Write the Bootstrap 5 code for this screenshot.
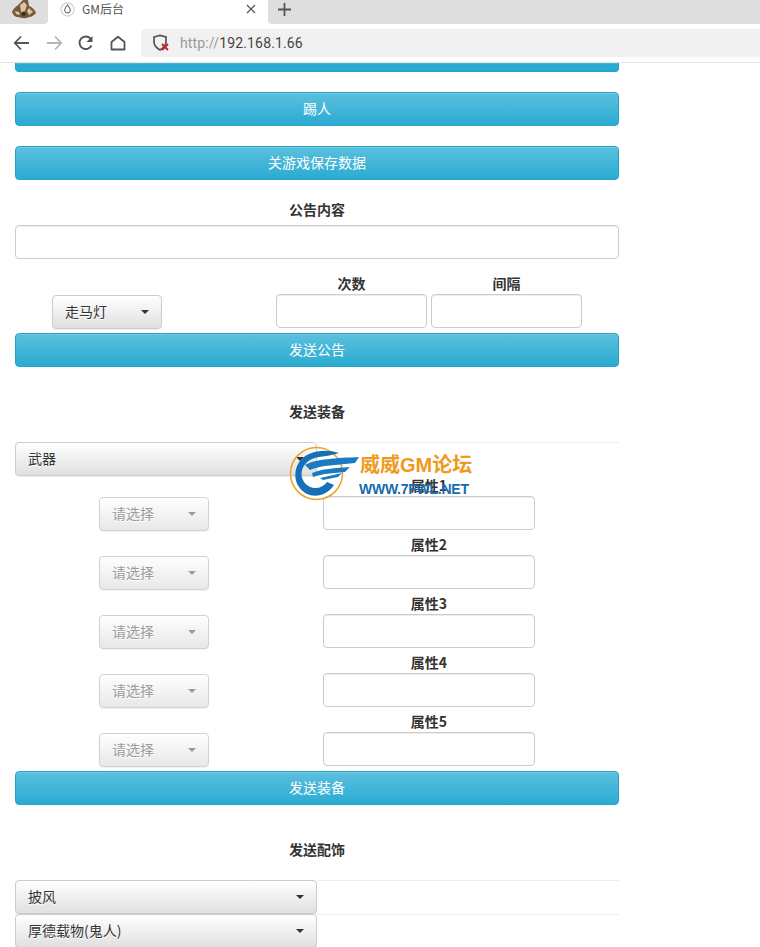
<!DOCTYPE html>
<html lang="zh">
<head>
<meta charset="utf-8">
<title>GM后台</title>
<link rel="stylesheet" href="https://cdn.jsdelivr.net/npm/bootstrap@5.3.0/dist/css/bootstrap.min.css">
<style>
html,body{height:947px;overflow:hidden;background:#fff}
body{font-family:"Noto Sans CJK SC","Liberation Sans",sans-serif;font-size:14px;color:#333;position:relative}
.tabstrip{height:24px;background:#fff;overflow:hidden}
.avatar-tab{width:48px;height:24px;justify-content:center;border-bottom-right-radius:4px;background:#dedede;padding-bottom:5px}
.active-tab{width:220px;height:24px;background:#fff;padding:0 12px 6px 12px;font-size:12px;color:#555}
.tab-title{margin-left:7px}
.newtab{flex:1;height:24px;padding:0 0 6px 10px;background:#dedede;border-bottom-left-radius:4px}
.toolbar{height:39px;background:#fff;border-bottom:1px solid #e6e6e6;padding:0 0 0 13px;overflow:hidden}
.tool-icons{gap:14px}
.urlbar{height:28px;flex:1;margin-left:14px;background:#f1f1f1;border-radius:4px 0 0 4px;padding-left:11px;font-size:14px;font-family:"Roboto","Liberation Sans",sans-serif;color:#444;letter-spacing:.15px}
.scheme{color:#999;margin-left:10px}
.pagebody{width:634px;height:885px;padding:0 15px;overflow:hidden}
.sky{display:block;width:100%;height:34px;padding:0 0 2px;border:1px solid #28a4c9;border-radius:4px;color:#fff;font-size:14px;background:linear-gradient(#5bc0de,#2aabd2);box-shadow:inset 0 1px 0 rgba(255,255,255,.15)}
.sky:hover{color:#fff}
.clipped{height:9px;border-top:0;border-radius:0 0 4px 4px;background:#2aabd2;margin-bottom:20px}
.gap-after{margin-bottom:20px}
.capt{font-weight:700;text-align:center;line-height:18px;height:20px}
.capt-gap{margin-bottom:5px}
.field{display:block;height:34px;width:100%;border:1px solid #ccc;border-radius:4px;background:#fff;box-shadow:inset 0 1px 1px rgba(0,0,0,.075)}
.pick{display:flex;align-items:center;justify-content:space-between;height:34px;padding:0 12px 2px;border:1px solid #ccc;border-radius:4px;color:#333;font-size:14px;background:linear-gradient(#fff,#e0e0e0);text-shadow:0 1px 0 #fff;box-shadow:inset 0 1px 0 rgba(255,255,255,.15),0 1px 1px rgba(0,0,0,.075)}
.pick::after{margin:2px 0 0;border-top-width:4px;border-right-width:4px;border-left-width:4px;vertical-align:middle}
.pick-sm{width:110px}
.pick-wide{width:302px}
.pick[disabled]{opacity:.65;color:#666;background:linear-gradient(#fff,#dcdcdc);border-color:#bbb}
.notice-row{height:74px}
.notice-type{margin-left:37px;margin-top:36px}
.count-col{width:151px}
.count-col+.count-col{margin-left:4px}
.count-wrap{margin-left:114px;margin-top:15px}
.equip-head{margin-top:35px;margin-bottom:20px}
.rule-row{height:34px}
.rule-fill{flex:1;border-top:1px solid #eee}
.attr{height:59px}
.attr-left{width:308px;padding-left:84px;padding-top:21px}
.attr-right{width:212px}
.mark-logo{position:absolute;left:289px;top:445px;width:185px;height:60px;pointer-events:none}
.mark-cn{position:absolute;left:71px;top:6px;font-size:20px;line-height:28px;font-weight:700;color:#ef9a1c;white-space:nowrap;font-family:"Liberation Sans","Noto Sans CJK SC",sans-serif}
.mark-en{position:absolute;left:70px;top:36px;font-size:14px;line-height:16px;font-weight:700;color:#156bb0;white-space:nowrap;font-family:"Liberation Sans",sans-serif;letter-spacing:-.25px}
</style>
</head>
<body>
<div class="tabstrip d-flex align-items-stretch">
  <div class="avatar-tab d-flex align-items-center">
    <svg width="26" height="20" viewBox="0 0 26 20"><path d="M1 12C3 7 7 6 9 3l3-3h5l1 6c3 1 6 4 7 7-3 4-7 4-10 5-3 1-6-1-8-1-3 0-5-2-6-5z" fill="#75593a"/><path d="M9 5l4-3 3 3-2 6-4 1zM18 8l4 4-4 3-2-4zM4 11l4 1 1 3-4-1z" fill="#d9c5a3"/><path d="M12 12l3 1-1 3-4-1z" fill="#3c2a1a"/></svg>
  </div>
  <div class="active-tab d-flex align-items-center">
    <svg width="15" height="15" viewBox="0 0 16 16" fill="none"><circle cx="8" cy="8" r="7" stroke="#ccc" stroke-width="1.2"/><path d="M8 3c2 2.6 3 4 3 5.6a3 3 0 0 1-6 0C5 7 6 5.600 8 3z" stroke="#777" stroke-width="1.2"/></svg>
    <span class="tab-title flex-grow-1">GM后台</span>
    <svg width="10" height="10" viewBox="0 0 10 10"><path d="M1 1l8 8M9 1l-8 8" stroke="#555" stroke-width="1.2"/></svg>
  </div>
  <div class="newtab d-flex align-items-center">
    <svg width="13" height="13" viewBox="0 0 13 13"><path d="M6.500 0v13M0 6.500h13" stroke="#555" stroke-width="1.800"/></svg>
  </div>
</div>
<div class="toolbar d-flex align-items-center">
  <div class="tool-icons d-flex align-items-center">
    <svg width="18" height="16" viewBox="0 0 18 16" fill="none"><path d="M16 8H2M8 1.500L1.800 8 8 14.500" stroke="#555" stroke-width="1.800"/></svg>
    <svg width="18" height="16" viewBox="0 0 18 16" fill="none"><path d="M2 8h14M10 1.500L16.200 8 10 14.500" stroke="#b5b5b5" stroke-width="1.800"/></svg>
    <svg width="18" height="16" viewBox="0 0 18 16" fill="none"><path d="M14.500 10.500A6.300 6.300 0 1 1 13.500 3.500" stroke="#555" stroke-width="1.900"/><path d="M15.500 1v6h-6z" fill="#555"/></svg>
    <svg width="18" height="16" viewBox="0 0 18 16" fill="none"><path d="M2.500 14.500V7L9 1.800 15.500 7v7.500z" stroke="#555" stroke-width="1.800" stroke-linejoin="round"/></svg>
  </div>
  <div class="urlbar d-flex align-items-center">
    <svg width="18" height="18" viewBox="0 0 18 18" fill="none"><path d="M2 3l6-1.500L14 3v5c0 3.500-2.500 6-6 8-3.500-2-6-4.500-6-8z" stroke="#555" stroke-width="1.700"/><path d="M10 10l6 6M16 10l-6 6" stroke="#c5262c" stroke-width="2"/></svg>
    <span class="scheme">http://</span><span>192.168.1.66</span>
  </div>
</div>
<main class="pagebody">
  <button class="sky clipped" type="button" aria-label="按钮"></button>
  <button class="btn sky gap-after" type="button">踢人</button>
  <button class="btn sky gap-after" type="button">关游戏保存数据</button>
  <div class="capt capt-gap">公告内容</div>
  <input class="field" type="text">
  <div class="d-flex notice-row">
    <div class="dropdown notice-type">
      <button class="btn pick pick-sm dropdown-toggle" type="button">走马灯</button>
    </div>
    <div class="d-flex count-wrap">
      <div class="count-col"><div class="capt">次数</div><input class="field" type="text"></div>
      <div class="count-col"><div class="capt">间隔</div><input class="field" type="text"></div>
    </div>
  </div>
  <button class="btn sky" type="button">发送公告</button>
  <div class="capt equip-head">发送装备</div>
  <div class="d-flex rule-row">
    <button class="btn pick pick-wide dropdown-toggle" type="button">武器</button>
    <div class="rule-fill"></div>
  </div>
  <div>
    <div class="d-flex attr">
      <div class="attr-left"><button class="btn pick pick-sm dropdown-toggle" type="button" disabled>请选择</button></div>
      <div class="attr-right"><div class="capt">属性1</div><input class="field" type="text"></div>
    </div>
    <div class="d-flex attr">
      <div class="attr-left"><button class="btn pick pick-sm dropdown-toggle" type="button" disabled>请选择</button></div>
      <div class="attr-right"><div class="capt">属性2</div><input class="field" type="text"></div>
    </div>
    <div class="d-flex attr">
      <div class="attr-left"><button class="btn pick pick-sm dropdown-toggle" type="button" disabled>请选择</button></div>
      <div class="attr-right"><div class="capt">属性3</div><input class="field" type="text"></div>
    </div>
    <div class="d-flex attr">
      <div class="attr-left"><button class="btn pick pick-sm dropdown-toggle" type="button" disabled>请选择</button></div>
      <div class="attr-right"><div class="capt">属性4</div><input class="field" type="text"></div>
    </div>
    <div class="d-flex attr">
      <div class="attr-left"><button class="btn pick pick-sm dropdown-toggle" type="button" disabled>请选择</button></div>
      <div class="attr-right"><div class="capt">属性5</div><input class="field" type="text"></div>
    </div>
  </div>
  <button class="btn sky" type="button">发送装备</button>
  <div class="capt equip-head">发送配饰</div>
  <div class="d-flex rule-row">
    <button class="btn pick pick-wide dropdown-toggle" type="button">披风</button>
    <div class="rule-fill"></div>
  </div>
  <div class="d-flex rule-row">
    <button class="btn pick pick-wide dropdown-toggle" type="button">厚德载物(鬼人)</button>
    <div class="rule-fill"></div>
  </div>
</main>
<div class="mark-logo">
  <svg width="72" height="60" viewBox="0 0 72 60" fill="none">
    <circle cx="27.500" cy="28.500" r="26" stroke="#eda32a" stroke-width="1.500"/>
    <path d="M50 8C40 5 30 5 20 9C6 15 3 32 10 42C18 54 36 54 45 40L38 37C32 45 21 45 15 37C10 29 13 20 21 15C28 11 38 12 50 8z" fill="#1670b6"/>
    <path d="M16 20C26 14 48 13 70 12L66 18L36 21C30 22 25 23 21 25z" fill="#1a7bc0"/>
    <path d="M23 28C32 24 46 23 61 22L56 27L36 29C31 30 27 31 24 32z" fill="#1a7bc0"/>
    <path d="M31 33L53 28L49 32L34 35z" fill="#1a7bc0"/>
  </svg>
  <span class="mark-cn">威威GM论坛</span>
  <span class="mark-en">WWW.7FWL.NET</span>
</div>
<script src="https://cdn.jsdelivr.net/npm/bootstrap@5.3.0/dist/js/bootstrap.bundle.min.js"></script>
</body>
</html>
